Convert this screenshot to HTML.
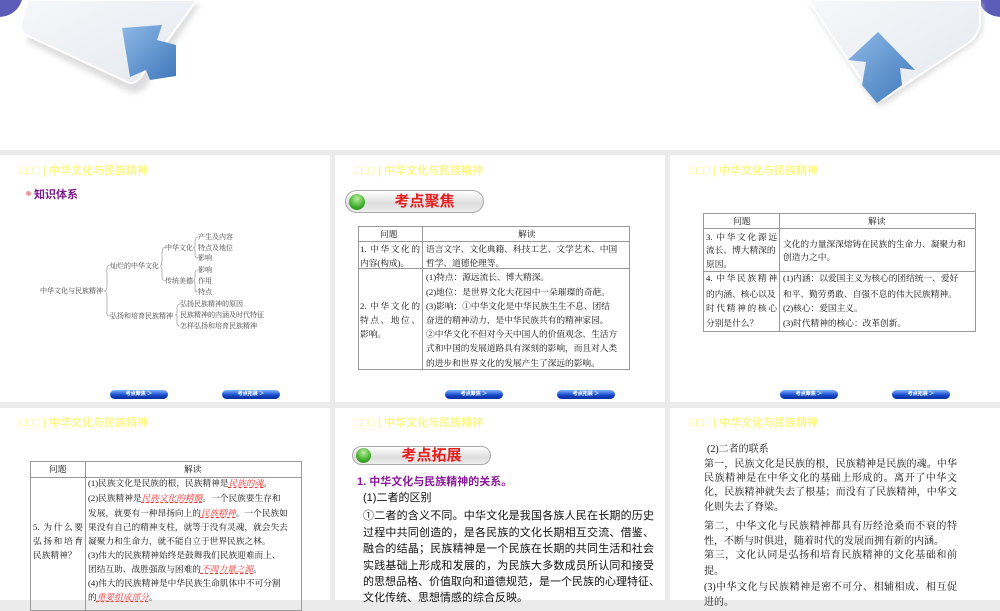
<!DOCTYPE html>
<html><head><meta charset="utf-8"><style>
*{margin:0;padding:0;box-sizing:border-box}
body{width:1000px;height:600px;overflow:hidden;background:#ebebeb;position:relative;font-family:"Liberation Serif","Noto Serif CJK SC",serif;color:#111}
.top{position:absolute;left:0;top:0;width:1000px;height:150px;background:#fff}
.s{position:absolute;background:#fff;overflow:hidden}
.h{position:absolute;font:bold 11px "Liberation Sans","Noto Sans CJK SC",sans-serif;color:#fbf78a;white-space:nowrap}
.l{position:absolute;white-space:nowrap;line-height:14px;font-size:8.7px}
.j{text-align:justify;text-align-last:justify}
.t{position:absolute;font-size:7px;color:#444;white-space:nowrap;line-height:10px}
.nav{position:absolute;width:58px;height:9px;border-radius:5px;background:linear-gradient(#7fb3ff,#1346c8 60%,#0a2f9a);font:bold 5px "Liberation Sans",sans-serif;color:#fff;text-align:center;line-height:9px}
.tb{position:absolute;border:1px solid #999}
.vl{position:absolute;background:#999;width:1px}
.hl{position:absolute;background:#999;height:1px}
.r{color:#e33;font-style:italic;text-decoration:underline dashed #e33}
.pill{position:absolute;width:139px;height:23px;border-radius:12px;border:1px solid #aaa;background:linear-gradient(#fff,#ddd 60%,#eee)}
.pill i{position:absolute;left:3px;top:3px;width:16px;height:16px;border-radius:50%;background:radial-gradient(circle at 50% 30%,#bff0a0,#3fae2a 60%,#1d7a10)}
.pill b{position:absolute;left:20px;right:0;top:1px;text-align:center;font:bold 15px/19px "Liberation Sans","Noto Sans CJK SC",sans-serif;color:#e61e1e}
.p{position:absolute;white-space:nowrap;font:bold 11px "Liberation Sans","Noto Sans CJK SC",sans-serif}
.m{position:absolute;left:363px;width:291px;font:11px/16px "Liberation Sans","Noto Sans CJK SC",sans-serif;white-space:nowrap;text-align:justify;text-align-last:justify;color:#111}
.n{position:absolute;left:704px;width:253px;font:10px/14px "Liberation Serif","Noto Serif CJK SC",serif;white-space:nowrap;text-align:justify;text-align-last:justify;color:#111}
.e{text-align-last:left}
</style></head><body>
<div class="top">
<svg width="1000" height="150" style="position:absolute;left:0;top:0">
<defs><linearGradient id="g" x1="0" y1="0" x2="1" y2="1"><stop offset="0" stop-color="#f6f8fa"/><stop offset="1" stop-color="#e4e8ee"/></linearGradient>
<linearGradient id="a" x1="0" y1="0" x2="1" y2="1"><stop offset="0" stop-color="#8fb9e6"/><stop offset="1" stop-color="#3e78bb"/></linearGradient>
<filter id="f"><feGaussianBlur stdDeviation="3"/></filter></defs>
<path d="M0 0 L22 0 Q18 12 6 16 L0 17Z" fill="#5a5cb8"/>
<path d="M30 4 L200 4 L145 88 Q136 96 126 90 L28 42Z" fill="#ddd" filter="url(#f)"/>
<path d="M28 0 L197 0 L140 78 Q133 86 125 81 L26 35 Q18 30 22 20Z" fill="url(#g)" stroke="#fff" stroke-width="2"/>
<path d="M122 28 L162 25 L157 40 L176 45 L176 76 L150 80 L146 70 L130 77 Z" fill="url(#a)"/>
<path d="M1000 0 L978 0 Q982 12 994 16 L1000 17Z" fill="#5a5cb8"/>
<path d="M810 4 L982 4 L982 30 Q978 40 970 46 L885 104 Q876 108 872 100Z" fill="#ddd" filter="url(#f)"/>
<path d="M808 0 L980 0 L980 25 Q978 35 970 42 L885 98 Q878 104 872 96 Z" fill="url(#g)" stroke="#fff" stroke-width="2"/>
<path d="M878 32 L915 70 L900 68 L902 85 L877 103 L862 85 L866 62 L848 60 Z" fill="url(#a)"/>
</svg></div>

<!-- slide 1 -->
<div class="s" style="left:0;top:155px;width:330px;height:247px"></div>
<div class="h" style="left:20px;top:162px">□□□ | 中华文化与民族精神</div>
<div style="position:absolute;left:26px;top:191px;width:5px;height:5px;border-radius:50%;background:#e99"></div>
<div class="p" style="left:34px;top:186px;color:#7a1a8a;font-size:11px">知识体系</div>
<div class="t" style="left:40px;top:286px">中华文化与民族精神</div>
<div class="t" style="left:110px;top:261px">灿烂的中华文化</div>
<div class="t" style="left:110px;top:311px">弘扬和培育民族精神</div>
<div class="t" style="left:165px;top:243px">中华文化</div>
<div class="t" style="left:165px;top:276px">传统美德</div>
<div class="t" style="left:198px;top:232px">产生及内容</div>
<div class="t" style="left:198px;top:243px">特点及地位</div>
<div class="t" style="left:198px;top:253px">影响</div>
<div class="t" style="left:198px;top:265px">影响</div>
<div class="t" style="left:198px;top:276px">作用</div>
<div class="t" style="left:198px;top:287px">特点</div>
<div class="t" style="left:180px;top:299px">弘扬民族精神的原因</div>
<div class="t" style="left:180px;top:310px">民族精神的内涵及时代特征</div>
<div class="t" style="left:180px;top:321px">怎样弘扬和培育民族精神</div>
<svg width="330" height="247" style="position:absolute;left:0;top:155px" fill="none" stroke="#888" stroke-width="0.6">
<path d="M110 110 Q106 110 107 118 L107 131 Q107 136 104 136 Q107 136 107 141 L107 156 Q106 161 110 161"/>
<path d="M166 92 Q162 92 162 98 L162 106 Q162 111 160 111 Q162 111 162 116 L162 122 Q162 126 166 126"/>
<path d="M198 82 Q195 82 195 87 L195 92 Q195 93 193 93 Q195 93 195 95 L195 100 Q195 103 198 103"/>
<path d="M198 115 Q195 115 195 118 L195 121 Q195 126 193 126 Q195 126 195 128 L195 134 Q195 137 198 137"/>
<path d="M180 149 Q177 149 177 153 L177 158 Q177 160 175 160 Q177 160 177 162 L177 168 Q177 171 180 171"/>
</svg>
<div class="nav" style="left:110px;top:390px">考点聚焦 ＞</div>
<div class="nav" style="left:222px;top:390px">考点拓展 ＞</div>

<!-- slide 2 -->
<div class="s" style="left:335px;top:155px;width:330px;height:247px"></div>
<div class="h" style="left:355px;top:162px">□□□ | 中华文化与民族精神</div>
<div class="pill" style="left:345px;top:190px"><i></i><b>考点聚焦</b></div>
<div class="tb" style="left:358px;top:226px;width:272px;height:144px"></div>
<div class="vl" style="left:422px;top:226px;height:144px"></div>
<div class="hl" style="left:358px;top:241px;width:272px"></div>
<div class="hl" style="left:358px;top:268px;width:272px"></div>
<div class="l" style="left:380px;top:227px">问题</div>
<div class="l" style="left:518px;top:227px">解读</div>
<div class="l j" style="left:360px;top:242px;width:60px">1. 中华文化的</div>
<div class="l" style="left:360px;top:256px">内容(构成)。</div>
<div class="l" style="left:426px;top:242px">语言文字、文化典籍、科技工艺、文学艺术、中国</div>
<div class="l" style="left:426px;top:256px">哲学、道德伦理等。</div>
<div class="l j" style="left:360px;top:299px;width:60px">2. 中华文化的</div>
<div class="l j" style="left:360px;top:313px;width:60px">特点、地位、</div>
<div class="l" style="left:360px;top:327px">影响。</div>
<div class="l" style="left:426px;top:270px">(1)特点：源远流长、博大精深。</div>
<div class="l" style="left:426px;top:285px">(2)地位：是世界文化大花园中一朵璀璨的奇葩。</div>
<div class="l" style="left:426px;top:299px">(3)影响：①中华文化是中华民族生生不息、团结</div>
<div class="l" style="left:426px;top:313px">奋进的精神动力，是中华民族共有的精神家园。</div>
<div class="l" style="left:426px;top:327px">②中华文化不但对今天中国人的价值观念、生活方</div>
<div class="l" style="left:426px;top:341px">式和中国的发展道路具有深刻的影响，而且对人类</div>
<div class="l" style="left:426px;top:356px">的进步和世界文化的发展产生了深远的影响。</div>
<div class="nav" style="left:445px;top:390px">考点聚焦 ＞</div>
<div class="nav" style="left:557px;top:390px">考点拓展 ＞</div>

<!-- slide 3 -->
<div class="s" style="left:670px;top:155px;width:330px;height:247px"></div>
<div class="h" style="left:690px;top:162px">□□□ | 中华文化与民族精神</div>
<div class="tb" style="left:703px;top:213px;width:273px;height:119px"></div>
<div class="vl" style="left:779px;top:213px;height:119px"></div>
<div class="hl" style="left:703px;top:228px;width:273px"></div>
<div class="hl" style="left:703px;top:271px;width:273px"></div>
<div class="l" style="left:733px;top:214px">问题</div>
<div class="l" style="left:868px;top:214px">解读</div>
<div class="l j" style="left:706px;top:230px;width:71px">3. 中华文化源远</div>
<div class="l" style="left:706px;top:243px">流长、博大精深的</div>
<div class="l" style="left:706px;top:257px">原因。</div>
<div class="l" style="left:783px;top:237px">文化的力量深深熔铸在民族的生命力、凝聚力和</div>
<div class="l" style="left:783px;top:250px">创造力之中。</div>
<div class="l j" style="left:706px;top:271px;width:71px">4. 中华民族精神</div>
<div class="l" style="left:706px;top:287px">的内涵、核心以及</div>
<div class="l j" style="left:706px;top:301px;width:71px">时代精神的核心</div>
<div class="l" style="left:706px;top:316px">分别是什么？</div>
<div class="l" style="left:783px;top:271px">(1)内涵：以爱国主义为核心的团结统一、爱好</div>
<div class="l" style="left:783px;top:287px">和平、勤劳勇敢、自强不息的伟大民族精神。</div>
<div class="l" style="left:783px;top:301px">(2)核心：爱国主义。</div>
<div class="l" style="left:783px;top:316px">(3)时代精神的核心：改革创新。</div>
<div class="nav" style="left:780px;top:390px">考点聚焦 ＞</div>
<div class="nav" style="left:892px;top:390px">考点拓展 ＞</div>

<!-- slide 4 -->
<div class="s" style="left:0;top:408px;width:330px;height:192px"></div>
<div class="h" style="left:20px;top:414px">□□□ | 中华文化与民族精神</div>
<div class="tb" style="left:30px;top:461px;width:272px;height:150px"></div>
<div class="vl" style="left:85px;top:461px;height:150px"></div>
<div class="hl" style="left:30px;top:477px;width:272px"></div>
<div class="l" style="left:49px;top:462px">问题</div>
<div class="l" style="left:184px;top:462px">解读</div>
<div class="l j" style="left:33px;top:520px;width:50px">5. 为什么要</div>
<div class="l j" style="left:33px;top:534px;width:50px">弘扬和培育</div>
<div class="l" style="left:33px;top:548px">民族精神？</div>
<div class="l" style="left:88px;top:476px">(1)民族文化是民族的根，民族精神是<span class="r">民族的魂</span>。</div>
<div class="l" style="left:88px;top:491px">(2)民族精神是<span class="r">民族文化的精髓</span>。一个民族要生存和</div>
<div class="l" style="left:88px;top:506px">发展，就要有一种昂扬向上的<span class="r">民族精神</span>。一个民族如</div>
<div class="l" style="left:88px;top:520px">果没有自己的精神支柱，就等于没有灵魂，就会失去</div>
<div class="l" style="left:88px;top:534px">凝聚力和生命力，就不能自立于世界民族之林。</div>
<div class="l" style="left:88px;top:548px">(3)伟大的民族精神始终是鼓舞我们民族迎难而上、</div>
<div class="l" style="left:88px;top:562px">团结互助、战胜强敌与困难的<span class="r">不竭力量之源</span>。</div>
<div class="l" style="left:88px;top:576px">(4)伟大的民族精神是中华民族生命肌体中不可分割</div>
<div class="l" style="left:88px;top:590px">的<span class="r">重要组成部分</span>。</div>

<!-- slide 5 -->
<div class="s" style="left:335px;top:408px;width:330px;height:192px"></div>
<div class="h" style="left:355px;top:414px">□□□ | 中华文化与民族精神</div>
<div class="pill" style="left:352px;top:446px;height:19px"><i style="top:1px;width:15px;height:15px"></i><b style="top:-1px">考点拓展</b></div>
<div class="p" style="left:357px;top:473px;color:#8a1a9a">1. 中华文化与民族精神的关系。</div>
<div class="m e" style="top:490px">(1)二者的区别</div>
<div class="m" style="top:508px">①二者的含义不同。中华文化是我国各族人民在长期的历史</div>
<div class="m" style="top:525px">过程中共同创造的，是各民族的文化长期相互交流、借鉴、</div>
<div class="m" style="top:541px">融合的结晶；民族精神是一个民族在长期的共同生活和社会</div>
<div class="m" style="top:558px">实践基础上形成和发展的，为民族大多数成员所认同和接受</div>
<div class="m" style="top:574px">的思想品格、价值取向和道德规范，是一个民族的心理特征、</div>
<div class="m e" style="top:590px">文化传统、思想情感的综合反映。</div>

<!-- slide 6 -->
<div class="s" style="left:670px;top:408px;width:330px;height:192px"></div>
<div class="h" style="left:690px;top:414px">□□□ | 中华文化与民族精神</div>
<div class="n e" style="top:443px;left:707px">(2)二者的联系</div>
<div class="n" style="top:458px">第一，民族文化是民族的根，民族精神是民族的魂。中华</div>
<div class="n" style="top:472px">民族精神是在中华文化的基础上形成的。离开了中华文</div>
<div class="n" style="top:486px">化，民族精神就失去了根基；而没有了民族精神，中华文</div>
<div class="n e" style="top:501px">化则失去了脊梁。</div>
<div class="n" style="top:520px">第二，中华文化与民族精神都具有历经沧桑而不衰的特</div>
<div class="n e" style="top:535px">性，不断与时俱进，随着时代的发展而拥有新的内涵。</div>
<div class="n" style="top:549px">第三，文化认同是弘扬和培育民族精神的文化基础和前</div>
<div class="n e" style="top:565px">提。</div>
<div class="n" style="top:581px">(3)中华文化与民族精神是密不可分、相辅相成、相互促</div>
<div class="n e" style="top:596px">进的。</div>
</body></html>
